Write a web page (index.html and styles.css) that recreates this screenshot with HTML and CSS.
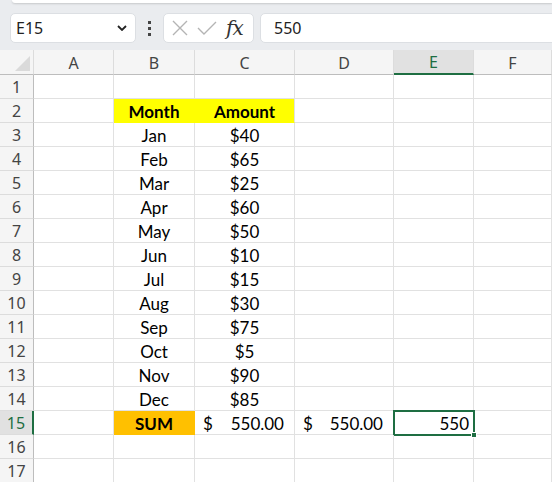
FILE: index.html
```html
<!DOCTYPE html>
<html lang="en">
<head>
    <meta charset="UTF-8">
    <title>Book1 - Excel</title>
    <link rel="stylesheet" href="styles.css">
</head>
<body>
    <div class="toolbar">
        <div class="ribbon-edge"></div>
        <div class="formula-row">
            <div class="name-box">
                <span>E15</span>
                <svg class="chevron" width="10" height="6" viewBox="0 0 10 6"><path d="M1 1 L5 5 L9 1" fill="none" stroke="#222" stroke-width="1.8"/></svg>
            </div>
            <div class="grip"><i></i><i></i><i></i></div>
            <div class="fx-box">
                <svg width="18" height="18" viewBox="0 0 18 18"><path d="M2 2 L16 16 M16 2 L2 16" stroke="#b4b4b4" stroke-width="1.4"/></svg>
                <svg width="20" height="18" viewBox="0 0 20 18"><path d="M1 9 L7 15 L19 3" fill="none" stroke="#b4b4b4" stroke-width="1.4"/></svg>
                <span class="fx">fx</span>
            </div>
            <div class="formula-input">550</div>
        </div>
    </div>

    <div class="sheet">
        <div class="row head">
            <div class="cell corner"><span class="tri"></span></div>
            <div class="cell col">A</div>
            <div class="cell col">B</div>
            <div class="cell col">C</div>
            <div class="cell col">D</div>
            <div class="cell col active">E</div>
            <div class="cell col">F</div>
        </div>
        <div class="row">
            <div class="cell num">1</div>
            <div class="cell"></div><div class="cell"></div><div class="cell"></div><div class="cell"></div><div class="cell"></div><div class="cell"></div>
        </div>
        <div class="row">
            <div class="cell num">2</div>
            <div class="cell"></div>
            <div class="cell center bold yellow">Month</div>
            <div class="cell center bold yellow last">Amount</div>
            <div class="cell"></div><div class="cell"></div><div class="cell"></div>
        </div>
        <div class="row">
            <div class="cell num">3</div>
            <div class="cell"></div><div class="cell center">Jan</div><div class="cell center">$40</div>
            <div class="cell"></div><div class="cell"></div><div class="cell"></div>
        </div>
        <div class="row">
            <div class="cell num">4</div>
            <div class="cell"></div><div class="cell center">Feb</div><div class="cell center">$65</div>
            <div class="cell"></div><div class="cell"></div><div class="cell"></div>
        </div>
        <div class="row">
            <div class="cell num">5</div>
            <div class="cell"></div><div class="cell center">Mar</div><div class="cell center">$25</div>
            <div class="cell"></div><div class="cell"></div><div class="cell"></div>
        </div>
        <div class="row">
            <div class="cell num">6</div>
            <div class="cell"></div><div class="cell center">Apr</div><div class="cell center">$60</div>
            <div class="cell"></div><div class="cell"></div><div class="cell"></div>
        </div>
        <div class="row">
            <div class="cell num">7</div>
            <div class="cell"></div><div class="cell center">May</div><div class="cell center">$50</div>
            <div class="cell"></div><div class="cell"></div><div class="cell"></div>
        </div>
        <div class="row">
            <div class="cell num">8</div>
            <div class="cell"></div><div class="cell center">Jun</div><div class="cell center">$10</div>
            <div class="cell"></div><div class="cell"></div><div class="cell"></div>
        </div>
        <div class="row">
            <div class="cell num">9</div>
            <div class="cell"></div><div class="cell center">Jul</div><div class="cell center">$15</div>
            <div class="cell"></div><div class="cell"></div><div class="cell"></div>
        </div>
        <div class="row">
            <div class="cell num">10</div>
            <div class="cell"></div><div class="cell center">Aug</div><div class="cell center">$30</div>
            <div class="cell"></div><div class="cell"></div><div class="cell"></div>
        </div>
        <div class="row">
            <div class="cell num">11</div>
            <div class="cell"></div><div class="cell center">Sep</div><div class="cell center">$75</div>
            <div class="cell"></div><div class="cell"></div><div class="cell"></div>
        </div>
        <div class="row">
            <div class="cell num">12</div>
            <div class="cell"></div><div class="cell center">Oct</div><div class="cell center">$5</div>
            <div class="cell"></div><div class="cell"></div><div class="cell"></div>
        </div>
        <div class="row">
            <div class="cell num">13</div>
            <div class="cell"></div><div class="cell center">Nov</div><div class="cell center">$90</div>
            <div class="cell"></div><div class="cell"></div><div class="cell"></div>
        </div>
        <div class="row">
            <div class="cell num">14</div>
            <div class="cell"></div><div class="cell center">Dec</div><div class="cell center">$85</div>
            <div class="cell"></div><div class="cell"></div><div class="cell"></div>
        </div>
        <div class="row">
            <div class="cell num active">15</div>
            <div class="cell"></div>
            <div class="cell center bold orange">SUM</div>
            <div class="cell money"><span>$</span><span>550.00</span></div>
            <div class="cell money"><span>$</span><span>550.00</span></div>
            <div class="cell right selected">550<span class="handle"></span></div>
            <div class="cell"></div>
        </div>
        <div class="row">
            <div class="cell num">16</div>
            <div class="cell"></div><div class="cell"></div><div class="cell"></div><div class="cell"></div><div class="cell"></div><div class="cell"></div>
        </div>
        <div class="row">
            <div class="cell num">17</div>
            <div class="cell"></div><div class="cell"></div><div class="cell"></div><div class="cell"></div><div class="cell"></div><div class="cell"></div>
        </div>
    </div>
</body>
</html>
```

FILE: styles.css
```css
* {
    margin: 0;
    padding: 0;
    box-sizing: border-box;
}

body {
    background: #fff;
    font-family: 'Noto Sans', 'Open Sans', sans-serif;
    overflow: hidden;
}

/* formula bar */

.toolbar {
    background: #eaecef;
    height: 50px;
    overflow: hidden;
}

.ribbon-edge {
    height: 3px;
    margin-left: 12px;
    background: #fff;
    border-bottom-left-radius: 8px;
    box-shadow: 0 1px 2px rgba(0, 0, 0, 0.15);
}

.formula-row {
    display: flex;
    align-items: center;
    margin-top: 10px;
    height: 30px;
}

.name-box {
    margin-left: 10px;
    width: 126px;
    height: 30px;
    background: #fff;
    border: 1px solid #dcdfe3;
    border-radius: 5px;
    display: flex;
    align-items: center;
    justify-content: space-between;
    padding: 0 8px 0 5px;
    font-size: 16px;
    color: #222;
}

.grip {
    width: 27px;
    display: flex;
    flex-direction: column;
    align-items: center;
    gap: 3px;
}

.grip i {
    display: block;
    width: 3px;
    height: 3px;
    background: #444;
}

.fx-box {
    width: 91px;
    height: 30px;
    background: #fff;
    border: 1px solid #dcdfe3;
    border-radius: 5px;
    display: flex;
    align-items: center;
    padding-left: 7px;
    gap: 8px;
}

.fx {
    font-family: 'DejaVu Serif', 'Liberation Serif', serif;
    font-style: italic;
    font-size: 20px;
    color: #333;
    margin-left: 1px;
    letter-spacing: -1px;
}

.formula-input {
    flex: 1;
    margin-left: 6px;
    margin-right: -10px;
    height: 30px;
    background: #fff;
    border: 1px solid #dcdfe3;
    border-radius: 5px;
    display: flex;
    align-items: center;
    padding-left: 13px;
    font-size: 16px;
    color: #222;
}

/* grid */

.row {
    display: grid;
    grid-template-columns: 34px 80px 81px 100px 99px 80px 1fr;
    height: 24px;
}

.row.head {
    height: 25px;
}

.cell {
    position: relative;
    border-right: 1px solid #e1e1e1;
    border-bottom: 1px solid #e1e1e1;
    display: flex;
    align-items: center;
    padding: 1px 4px 0;
    font-family: Lato, 'Liberation Sans', sans-serif;
    font-size: 17px;
    color: #000;
    white-space: nowrap;
}

.head .cell {
    background: #f5f5f5;
    border-right-color: #dcdcdc;
    border-bottom-color: #bdbdbd;
    justify-content: center;
    font-family: 'Noto Sans', 'Open Sans', sans-serif;
    font-size: 16px;
    color: #444;
}

.head .col.active {
    background: #e1e1e1;
    color: #1e6e42;
    border-bottom: 2px solid #1e6e42;
}

.corner {
    overflow: hidden;
}

.tri {
    position: absolute;
    right: 3px;
    bottom: 3px;
    width: 0;
    height: 0;
    border-left: 15px solid transparent;
    border-bottom: 15px solid #dadada;
}

.num {
    background: #f5f5f5;
    border-right-color: #bdbdbd;
    border-bottom-color: #dcdcdc;
    justify-content: center;
    font-family: 'Noto Sans', 'Open Sans', sans-serif;
    font-size: 16px;
    color: #444;
}

.num.active {
    background: #e1e1e1;
    color: #1e6e42;
    border-right: 2px solid #1e6e42;
}

.center {
    justify-content: center;
}

.right {
    justify-content: flex-end;
}

.bold {
    font-weight: 700;
}

.yellow {
    background: #ffff00;
    border-color: #ffff00;
}

.yellow.last {
    border-right-color: #e1e1e1;
}

.orange {
    background: #ffc000;
    border-color: #ffc000;
}

.money {
    justify-content: space-between;
    padding: 1px 10px 0 8px;
}

.selected {
    outline: 2px solid #1e6e42;
    outline-offset: -1px;
    padding-right: 4px;
}

.handle {
    position: absolute;
    right: -4px;
    bottom: -4px;
    width: 6px;
    height: 6px;
    background: #1e6e42;
    border: 1px solid #fff;
    z-index: 2;
}
```
